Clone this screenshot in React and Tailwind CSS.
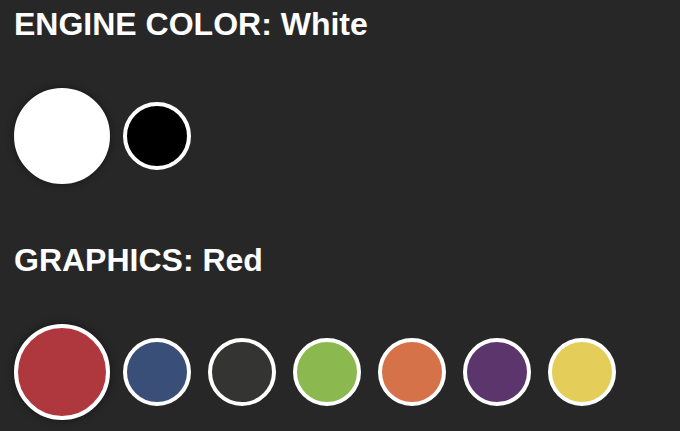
import React from "react";

const engine = [
  { name: "White", hex: "#ffffff" },
  { name: "Black", hex: "#000000" },
];

const graphics = [
  { name: "Red", hex: "#af383f" },
  { name: "Blue", hex: "#3a4f78" },
  { name: "Charcoal", hex: "#343432" },
  { name: "Green", hex: "#8bb84f" },
  { name: "Orange", hex: "#d6724a" },
  { name: "Purple", hex: "#5c356d" },
  { name: "Yellow", hex: "#e4cd58" },
];

function Swatch({ color, selected }) {
  if (selected) {
    return (
      <button
        className="h-[96px] w-[96px] shrink-0 rounded-full border-4 border-white shadow-[0_0_8px_rgba(0,0,0,0.45)] mr-[13px]"
        style={{ backgroundColor: color.hex }}
        aria-label={color.name}
      />
    );
  }
  return (
    <button
      className="h-[68px] w-[68px] shrink-0 rounded-full border-4 border-white mr-[17px]"
      style={{ backgroundColor: color.hex }}
      aria-label={color.name}
    />
  );
}

function Picker({ label, colors, selected }) {
  return (
    <div>
      <h2 className="text-[32px] leading-[36px] font-bold text-white">
        {label}: {selected}
      </h2>
      <div className="mt-[46px] flex h-[96px] items-center">
        {colors.map((c) => (
          <Swatch key={c.name} color={c} selected={c.name === selected} />
        ))}
      </div>
    </div>
  );
}

export default function App() {
  return (
    <div
      className="h-[431px] w-[680px] overflow-hidden bg-[#272727] pl-[14px] pt-[6px]"
      style={{ fontFamily: '"Liberation Sans", Arial, sans-serif' }}
    >
      <Picker label="ENGINE COLOR" colors={engine} selected="White" />
      <div className="mt-[58px]">
        <Picker label="GRAPHICS" colors={graphics} selected="Red" />
      </div>
    </div>
  );
}
